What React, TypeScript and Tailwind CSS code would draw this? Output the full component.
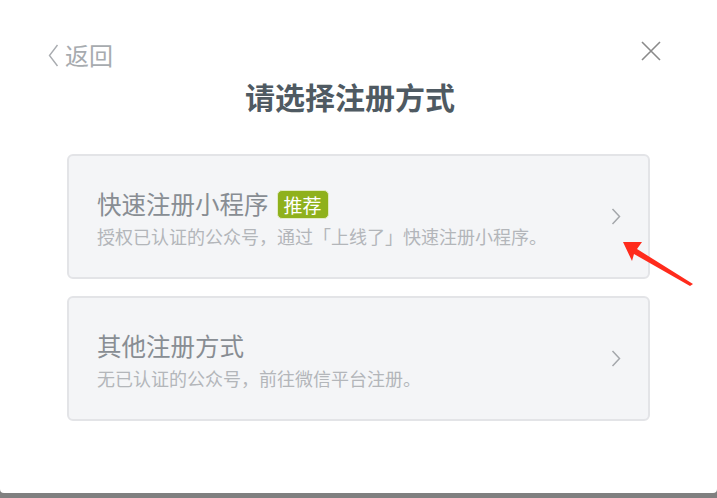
const font = { fontFamily: '"Noto Sans CJK SC", "Noto Sans", sans-serif' }

const Chevron = () => (
  <svg width="10" height="17" viewBox="0 0 10 17" fill="none" className="shrink-0">
    <path d="M1.5 1 L8.5 8.5 L1.5 16" stroke="#a4a7ab" strokeWidth="1.5" />
  </svg>
)

const Option = ({ title, desc, badge }: { title: string; desc: string; badge?: string }) => (
  <div className="flex items-center h-[125px] pl-[28px] pr-[27px] bg-[#f4f5f7] border-2 border-[#e3e4e7] rounded-[6px]">
    <div className="flex flex-col flex-1 pt-[4px]">
      <div className="flex items-center h-[32px]">
        <span className="text-[24.5px] leading-[32px] text-[#888d93]">{title}</span>
        {badge && (
          <span className="ml-[8px] h-[29px] px-[6px] flex items-center rounded-[5px] bg-[#8fb11c] border border-[#e3ebc6] text-white text-[19px] leading-none">
            {badge}
          </span>
        )}
      </div>
      <div className="mt-[3px] text-[18px] leading-[26px] text-[#b3b6ba]">{desc}</div>
    </div>
    <Chevron />
  </div>
)

export default function App() {
  return (
    <div className="w-[717px] h-[498px] bg-[#808080] overflow-hidden" style={font}>
      <div className="relative h-[493px] bg-white rounded-b-[4px]">
        <div className="flex items-center justify-between pt-[40px] pl-[48px] pr-[56px]">
          <div className="flex items-center h-[30px] gap-[6px]">
            <svg width="11" height="23" viewBox="0 0 11 23" fill="none">
              <path d="M9.5 1 L1.5 11.5 L9.5 22" stroke="#a9acb0" strokeWidth="1.4" />
            </svg>
            <span className="text-[24px] leading-[30px] text-[#a7abaf]">返回</span>
          </div>
          <svg width="20" height="20" viewBox="0 0 20 20" fill="none" className="-mt-[9px]">
            <path d="M1 1 L19 19 M19 1 L1 19" stroke="#8a8a8a" strokeWidth="1.6" />
          </svg>
        </div>

        <h1 className="mt-[7px] pr-[17px] text-center text-[30px] leading-[38px] font-bold text-[#4f5a62]">请选择注册方式</h1>

        <div className="flex flex-col gap-[17px] px-[67px] mt-[39px]">
          <Option
            title="快速注册小程序"
            badge="推荐"
            desc="授权已认证的公众号，通过「上线了」快速注册小程序。"
          />
          <Option title="其他注册方式" desc="无已认证的公众号，前往微信平台注册。" />
        </div>

        <svg className="absolute left-0 top-0 pointer-events-none" width="717" height="498" viewBox="0 0 717 498">
          <polygon points="623,242 642,242 637,249 693,284 690,286 634,254 632,261" fill="#ff2b1c" />
        </svg>
      </div>
    </div>
  )
}
